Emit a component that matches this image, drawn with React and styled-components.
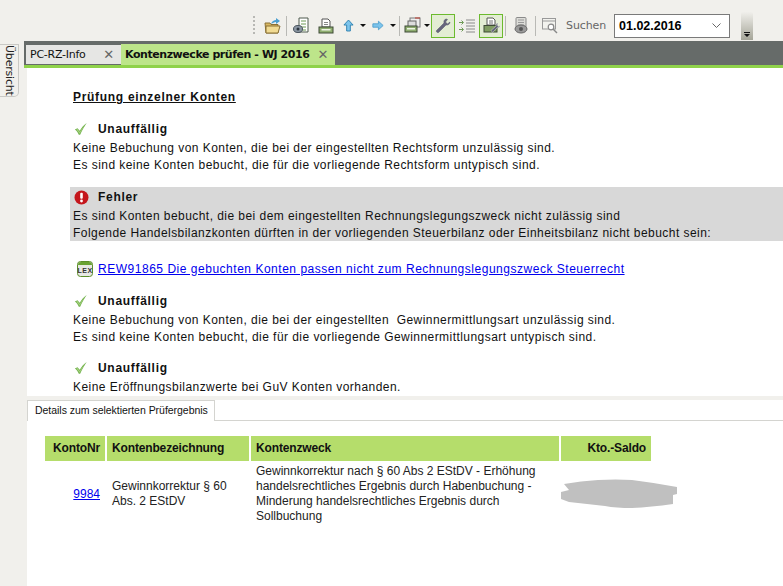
import React from 'react';
import styled, { createGlobalStyle } from 'styled-components';

const Global = createGlobalStyle`
  html, body { margin: 0; padding: 0; background: #f1f0ec; }
  body { font-family: "Liberation Sans", Arial, sans-serif; overflow: hidden; }
`;

const Page = styled.div`
  width: 783px;
  height: 586px;
  display: flex;
  flex-direction: column;
  overflow: hidden;
`;

const Toolbar = styled.div`
  height: 41px;
  flex-shrink: 0;
  display: flex;
  align-items: center;
  padding: 10px 0 0 253px;
  box-sizing: border-box;
  background: #f1f0ec;
`;

const Grip = styled.span`
  width: 2px;
  height: 20px;
  margin-right: 8px;
  background: repeating-linear-gradient(to bottom, #b8b8b4 0 2px, transparent 2px 4px);
`;

const Separator = styled.span`
  width: 1px;
  height: 20px;
  flex-shrink: 0;
  background: #b9b9b5;
  margin: 0 ${p => p.$r ?? p.$gap}px 0 ${p => p.$gap}px;
`;

const ToolIcon = styled.span`
  width: ${p => p.$w || 18}px;
  height: 24px;
  margin-right: ${p => p.$mr || 0}px;
  display: flex;
  align-items: center;
  justify-content: center;
  flex-shrink: 0;
  box-sizing: border-box;
  border: ${p => (p.$active ? '1px solid #6cba2e' : 'none')};
  background: ${p => (p.$active ? '#e3edd4' : 'transparent')};
`;

const Caret = styled.span`
  width: 0;
  height: 0;
  flex-shrink: 0;
  margin: 0 ${p => p.$mr ?? 5}px 0 ${p => p.$ml ?? 5}px;
  border-left: 3px solid transparent;
  border-right: 3px solid transparent;
  border-top: 3px solid #111;
`;

const SearchLabel = styled.span`
  width: 40px;
  flex-shrink: 0;
  font: 11px "DejaVu Sans", sans-serif;
  letter-spacing: -0.1px;
  color: #666;
  margin: 0 8px;
  white-space: nowrap;
`;

const DateBox = styled.div`
  width: 116px;
  height: 24px;
  flex-shrink: 0;
  box-sizing: border-box;
  border: 1px solid #7a7a7a;
  background: #fff;
  display: flex;
  align-items: center;
  justify-content: space-between;
  padding: 0 8px 0 4px;
  font: bold 12.5px "Liberation Sans", sans-serif;
  color: #000;
`;

const Overflow = styled.div`
  width: 12px;
  height: 28px;
  flex-shrink: 0;
  margin-left: 11px;
  background: linear-gradient(to bottom, #f0efeb, #a5a598);
  border-radius: 2px 2px 0 0;
  display: flex;
  align-items: flex-end;
  justify-content: center;
  padding-bottom: 3px;
  box-sizing: border-box;
`;

const Body = styled.div`
  flex: 1;
  display: flex;
  min-height: 0;
`;

const SideStrip = styled.div`
  width: 24px;
  flex-shrink: 0;
  padding-top: 3px;
  background: #f1f0ec;
`;

const SideTab = styled.div`
  width: 19px;
  height: 53px;
  box-sizing: border-box;
  border: 1px solid #c9c9c5;
  border-left: none;
  border-radius: 0 0 5px 0;
  background: #f1f0ec;
  display: flex;
  align-items: center;
  justify-content: center;
  writing-mode: vertical-rl;
  font: 11px "DejaVu Sans", sans-serif;
  letter-spacing: -0.2px;
  color: #222;
`;

const Main = styled.div`
  flex: 1;
  display: flex;
  flex-direction: column;
  min-width: 0;
`;

const TabBar = styled.div`
  height: 27px;
  flex-shrink: 0;
  box-sizing: border-box;
  display: flex;
  align-items: flex-end;
  padding: 3px 0 0 2px;
  background: #666b69;
  border-bottom: 3px solid #8fd24a;
`;

const Tab = styled.div`
  width: ${p => p.$w}px;
  height: ${p => (p.$active ? 21 : 19)}px;
  margin-bottom: ${p => (p.$active ? 0 : 1)}px;
  box-sizing: border-box;
  flex-shrink: 0;
  display: flex;
  align-items: center;
  justify-content: space-between;
  padding: 0 7px ${p => (p.$active ? 1 : 0)}px 4px;
  font: ${p => (p.$active ? 'bold' : 'normal')} 11px "DejaVu Sans", sans-serif;
  letter-spacing: ${p => (p.$active ? '-0.44px' : '-0.25px')};
  color: #111;
  white-space: nowrap;
  background: ${p => (p.$active ? '#bde58a' : '#e6e6e4')};
`;

const CloseMark = styled.span`
  font: bold 13px "DejaVu Sans", sans-serif;
  color: #666;
`;

const Report = styled.div`
  height: 328px;
  flex-shrink: 0;
  overflow: hidden;
  box-sizing: border-box;
  margin-left: 3px;
  padding: 21px 0 0 46px;
  background: #fff;
  color: #111;
  font-size: 12px;
  line-height: 17px;
  letter-spacing: 0.45px;
`;

const Title = styled.div`
  font-weight: bold;
  text-decoration: underline;
  font-size: 12px;
  letter-spacing: 0.7px;
  line-height: 16px;
  margin-bottom: 14px;
`;

const Section = styled.div`
  margin: ${p => (p.$error ? '13px 0 19px -3px' : '0 0 12px')};
  padding-left: ${p => (p.$error ? '3px' : '0')};
  background: ${p => (p.$error ? '#d8d8d8' : 'transparent')};
  height: ${p => (p.$error ? '54px' : 'auto')};
  box-sizing: border-box;
`;

const StatusRow = styled.div`
  display: flex;
  align-items: center;
  height: 20px;
  font-weight: bold;
  letter-spacing: 0.7px;
  margin-bottom: 1px;
  gap: 9px;
`;

const StatusIcon = styled.span`
  width: 16px;
  height: 16px;
  display: flex;
  align-items: center;
  justify-content: center;
`;

const Line = styled.div`
  white-space: pre;
`;

const LexRow = styled.div`
  display: flex;
  align-items: center;
  height: 18px;
  gap: 5px;
  margin: 0 0 13px 4px;
  letter-spacing: 0.52px;
`;

const Anchor = styled.a`
  color: #0000ee;
  text-decoration: underline;
`;

const DetailPane = styled.div`
  flex: 1;
  min-height: 0;
  margin-left: 3px;
  padding-top: 4px;
  display: flex;
  flex-direction: column;
  background: #f1f0ec;
`;

const DetailTabs = styled.div`
  height: 21px;
  flex-shrink: 0;
  box-sizing: border-box;
  border-bottom: 1px solid #d4d4d0;
  background: #fff;
  display: flex;
`;

const DetailTab = styled.div`
  width: 188px;
  height: 21px;
  box-sizing: border-box;
  border: 1px solid #d4d4d0;
  border-bottom: none;
  background: #fff;
  font-size: 10.5px;
  line-height: 18px;
  padding-left: 7px;
  color: #111;
  letter-spacing: -0.03px;
  white-space: nowrap;
`;

const DetailBody = styled.div`
  flex: 1;
  background: #fff;
  padding: 15px 0 0 18px;
`;

const Grid = styled.div`
  display: grid;
  grid-template-columns: 60px 142px 308px 90px;
  column-gap: 2px;
  width: 606px;
  font-size: 12px;
  color: #222;
`;

const Head = styled.div`
  height: 25px;
  background: #b5dd6b;
  font-weight: bold;
  color: #111;
  line-height: 25px;
  letter-spacing: -0.15px;
  padding: 0 ${p => (p.$right ? '5px' : '0')} 0 ${p => (p.$right ? '0' : '5px')};
  text-align: ${p => (p.$right ? 'right' : 'left')};
  white-space: nowrap;
`;

const Cell = styled.div`
  display: flex;
  align-items: center;
  min-height: 60px;
  padding: 3px ${p => (p.$right ? '5px' : '0')} 0 ${p => (p.$right ? '0' : '5px')};
  justify-content: ${p => (p.$right ? 'flex-end' : 'flex-start')};
  line-height: 15px;
  white-space: pre;
`;

const Redacted = styled.svg`
  display: block;
  margin: 0 -33px 0 0;
  flex-shrink: 0;
`;

const Check = () => (
  <svg width="14" height="14" viewBox="0 0 16 15">
    <path d="M1 8 L4 6.5 L6.5 9.5 C8.5 6 11 3 14.5 0.5 C12 4 9.5 8.5 7 14 L5.5 14 C4.5 11.5 3 9.5 1 8 Z" fill="#6fb04a" />
    <path d="M2.5 8 L4 7.5 L6.5 11 C8.5 7.5 10.5 5 13 2.5 C10.5 6 8.5 9.5 6.5 13 Z" fill="#a5d07e" />
  </svg>
);

const ErrorIcon = () => (
  <svg width="15" height="15" viewBox="0 0 15 15">
    <circle cx="7.5" cy="7.5" r="7" fill="#c4161c" />
    <rect x="6.2" y="2.8" width="2.6" height="6" rx="1" fill="#fff" />
    <circle cx="7.5" cy="11" r="1.4" fill="#fff" />
  </svg>
);

const LexIcon = () => (
  <svg width="16" height="16" viewBox="0 0 16 16">
    <rect x="0.5" y="0.5" width="15" height="15" rx="3" fill="#e8e8e4" stroke="#5c8f2a" />
    <path d="M1 4 Q1 1 4 1 L12 1 Q15 1 15 4 Z" fill="#6aa232" />
    <text x="8" y="12" textAnchor="middle" fontFamily="Liberation Sans" fontSize="7" fontWeight="bold" fill="#333">LEX</text>
  </svg>
);

const FolderIcon = () => (
  <svg width="17" height="17" viewBox="0 0 17 17">
    <path d="M1 6 H6 L7 7.5 H14 V16 H2 Z" fill="#d9b862" stroke="#8a7035" />
    <path d="M2 9 H16 L14 16 H2 Z" fill="#f1db93" stroke="#8a7035" />
    <path d="M7 7 C8 4 10 3 12 3 V1 L16 4 L12 7 V5 C10 5 9 6 7 7 Z" fill="#4b9fd0" />
  </svg>
);

const DocEyeIcon = () => (
  <svg width="17" height="17" viewBox="0 0 17 17">
    <path d="M6 1 H15 V15 H6 Z" fill="#fff" stroke="#4f5b4f" />
    <path d="M8 4 H13 M8 7 H13 M8 10 H13 M9 13 H13" stroke="#6d9a55" />
    <ellipse cx="5" cy="12" rx="4.5" ry="3.5" fill="#8c97a3" stroke="#48525c" />
    <circle cx="5" cy="12" r="1.5" fill="#2d3640" />
  </svg>
);

const PrintIcon = () => (
  <svg width="16" height="16" viewBox="0 0 16 16">
    <path d="M4 1 H10 L12 3 V9 H4 Z" fill="#fff" stroke="#555" />
    <path d="M6 4.5 H10 M6 6.5 H10" stroke="#888" />
    <rect x="1" y="9" width="14" height="6" fill="#8fae70" stroke="#3e4a36" />
    <rect x="3.5" y="11" width="9" height="1.5" fill="#eef4e5" />
  </svg>
);

const UpArrow = () => (
  <svg width="11" height="13" viewBox="0 0 12 14">
    <path d="M6 1 L11 6.5 H8 V13 H4 V6.5 H1 Z" fill="#7cc4ec" stroke="#2c7fae" />
  </svg>
);

const RightArrow = () => (
  <svg width="12" height="11" viewBox="0 0 14 12">
    <path d="M13 6 L7.5 1 V4 H1 V8 H7.5 V11 Z" fill="#7cc4ec" stroke="#4d9dca" />
  </svg>
);

const StackPrintIcon = () => (
  <svg width="17" height="17" viewBox="0 0 17 17">
    <rect x="6" y="1" width="10" height="9" fill="#eee" stroke="#777" />
    <path d="M11 1 H16" stroke="#c0392b" />
    <rect x="4" y="4" width="8" height="6" fill="#ddd" stroke="#666" />
    <rect x="1" y="9" width="12" height="6" fill="#8fae70" stroke="#3e4a36" />
    <rect x="3" y="11" width="8" height="1.5" fill="#eef4e5" />
  </svg>
);

const Wrench = () => (
  <svg width="16" height="16" viewBox="0 0 16 16">
    <path d="M11.5 1 C9.5 1 8.5 3 9 5 L1.5 12.5 C1 13.5 2 15 3.5 14.5 L11 7 C13 7.5 15 6 15 4 L12.5 6 L10.5 4 L12.5 1.5 Z" fill="#66667c" stroke="#53536a" strokeWidth="0.5" />
  </svg>
);

const IndentIcon = () => (
  <svg width="16" height="14" viewBox="0 0 16 14">
    <path d="M7 1 H16 M7 4 H16 M7 7 H16 M7 10 H16 M7 13 H16" stroke="#8a8a8a" />
    <path d="M0 3.5 H4 M2.5 1.5 L4.5 3.5 L2.5 5.5 M0 10.5 H4 M2.5 8.5 L4.5 10.5 L2.5 12.5" stroke="#6d9a55" fill="none" />
  </svg>
);

const PrintWrenchIcon = () => (
  <svg width="17" height="17" viewBox="0 0 17 17">
    <path d="M4 1 H10 L12 3 V8 H4 Z" fill="#fff" stroke="#555" />
    <path d="M6 4 H10 M6 6 H10" stroke="#777" />
    <rect x="1" y="8.5" width="13" height="6.5" fill="#7f9c62" stroke="#3e4a36" />
    <path d="M15 6 C13.5 6 12.5 7.5 13 9 L8 13.5 L9.5 15.5 L14.5 10.5 C16 11 17 10 16.8 8.5 L15.4 9.5 L14.3 8.5 Z" fill="#66667c" stroke="#f2f6ea" strokeWidth="0.4" />
  </svg>
);

const GreyDocEye = () => (
  <svg width="14" height="17" viewBox="0 0 14 17">
    <rect x="2" y="0.5" width="10" height="12" rx="1" fill="#dcdcd8" stroke="#8a8a8a" />
    <path d="M4 3 H10 M4 5.5 H10 M4 8 H10" stroke="#999" />
    <ellipse cx="7" cy="12" rx="6" ry="4" fill="#9a9a9a" stroke="#666" />
    <circle cx="7" cy="12" r="2" fill="#555" />
  </svg>
);

const SearchIcon = () => (
  <svg width="16" height="16" viewBox="0 0 16 16">
    <rect x="0.5" y="0.5" width="13" height="10.5" fill="#f2f2ee" stroke="#999" />
    <path d="M0.5 3 H13.5" stroke="#999" />
    <circle cx="9" cy="9" r="2.8" fill="#fff" stroke="#888" strokeWidth="1.2" />
    <path d="M11 11 L15 15" stroke="#888" strokeWidth="1.4" />
  </svg>
);

const Chevron = () => (
  <svg width="9" height="5" viewBox="0 0 9 5">
    <path d="M0.5 0.5 L4.5 4.5 L8.5 0.5" fill="none" stroke="#666" />
  </svg>
);

const OverflowGlyph = () => (
  <svg width="6" height="5" viewBox="0 0 6 5">
    <path d="M0 0 H6 V1 H0 Z M0 2 H6 L3 5 Z" fill="#111" />
  </svg>
);

const blocks = [
  { lines: ['Keine Bebuchung von Konten, die bei der eingestellten Rechtsform unzulässig sind.', 'Es sind keine Konten bebucht, die für die vorliegende Rechtsform untypisch sind.'] },
  { lines: ['Keine Bebuchung von Konten, die bei der eingestellten  Gewinnermittlungsart unzulässig sind.', 'Es sind keine Konten bebucht, die für die vorliegende Gewinnermittlungsart untypisch sind.'] },
  { lines: ['Keine Eröffnungsbilanzwerte bei GuV Konten vorhanden.'] },
];

const OkBlock = ({ lines }) => (
  <Section>
    <StatusRow>
      <StatusIcon><Check /></StatusIcon>
      Unauffällig
    </StatusRow>
    {lines.map(l => <Line key={l}>{l}</Line>)}
  </Section>
);

export default function App() {
  return (
    <Page>
      <Global />
      <Toolbar>
        <Grip />
        <ToolIcon><FolderIcon /></ToolIcon>
        <Separator $gap={5} />
        <ToolIcon $mr={7}><DocEyeIcon /></ToolIcon>
        <ToolIcon $mr={6}><PrintIcon /></ToolIcon>
        <ToolIcon $w={14}><UpArrow /></ToolIcon>
        <Caret />
        <ToolIcon $w={14}><RightArrow /></ToolIcon>
        <Caret $mr={0} />
        <Separator $gap={3} />
        <ToolIcon $w={19}><StackPrintIcon /></ToolIcon>
        <Caret $ml={2} $mr={1} />
        <ToolIcon $w={24} $active><Wrench /></ToolIcon>
        <ToolIcon $w={24}><IndentIcon /></ToolIcon>
        <ToolIcon $w={24} $active><PrintWrenchIcon /></ToolIcon>
        <Separator $gap={2} $r={7} />
        <ToolIcon $w={16}><GreyDocEye /></ToolIcon>
        <Separator $gap={6} />
        <ToolIcon $w={16}><SearchIcon /></ToolIcon>
        <SearchLabel>Suchen</SearchLabel>
        <DateBox>01.02.2016<Chevron /></DateBox>
        <Overflow><OverflowGlyph /></Overflow>
      </Toolbar>
      <Body>
        <SideStrip><SideTab>Übersicht</SideTab></SideStrip>
        <Main>
          <TabBar>
            <Tab $w={95}>PC-RZ-Info<CloseMark>✕</CloseMark></Tab>
            <Tab $w={214} $active>Kontenzwecke prüfen - WJ 2016<CloseMark>✕</CloseMark></Tab>
          </TabBar>
          <Report>
            <Title>Prüfung einzelner Konten</Title>
            <OkBlock lines={blocks[0].lines} />
            <Section $error>
              <StatusRow>
                <StatusIcon><ErrorIcon /></StatusIcon>
                Fehler
              </StatusRow>
              <Line>Es sind Konten bebucht, die bei dem eingestellten Rechnungslegungszweck nicht zulässig sind</Line>
              <Line>Folgende Handelsbilanzkonten dürften in der vorliegenden Steuerbilanz oder Einheitsbilanz nicht bebucht sein:</Line>
            </Section>
            <LexRow>
              <LexIcon />
              <Anchor href="#">REW91865 Die gebuchten Konten passen nicht zum Rechnungslegungszweck Steuerrecht</Anchor>
            </LexRow>
            <OkBlock lines={blocks[1].lines} />
            <OkBlock lines={blocks[2].lines} />
          </Report>
          <DetailPane>
            <DetailTabs><DetailTab>Details zum selektierten Prüfergebnis</DetailTab></DetailTabs>
            <DetailBody>
              <Grid>
                <Head $right>KontoNr</Head>
                <Head>Kontenbezeichnung</Head>
                <Head>Kontenzweck</Head>
                <Head $right>Kto.-Saldo</Head>
                <Cell $right><Anchor href="#">9984</Anchor></Cell>
                <Cell>{'Gewinnkorrektur § 60\nAbs. 2 EStDV'}</Cell>
                <Cell>{'Gewinnkorrektur nach § 60 Abs 2 EStDV - Erhöhung\nhandelsrechtliches Ergebnis durch Habenbuchung -\nMinderung handelsrechtliches Ergebnis durch\nSollbuchung'}</Cell>
                <Cell $right>
                  <Redacted width="118" height="30" viewBox="0 0 118 30">
                    <path d="M3 5 Q20 2 37 1 Q55 0 71 1 Q95 4 116 8 L116 15 L112 16 L112 25 Q90 28 71 29 Q55 29 44 27 L8 23 L0 20 L0 13 L8 11 Z" fill="#c0c0c0" />
                  </Redacted>
                </Cell>
              </Grid>
            </DetailBody>
          </DetailPane>
        </Main>
      </Body>
    </Page>
  );
}
